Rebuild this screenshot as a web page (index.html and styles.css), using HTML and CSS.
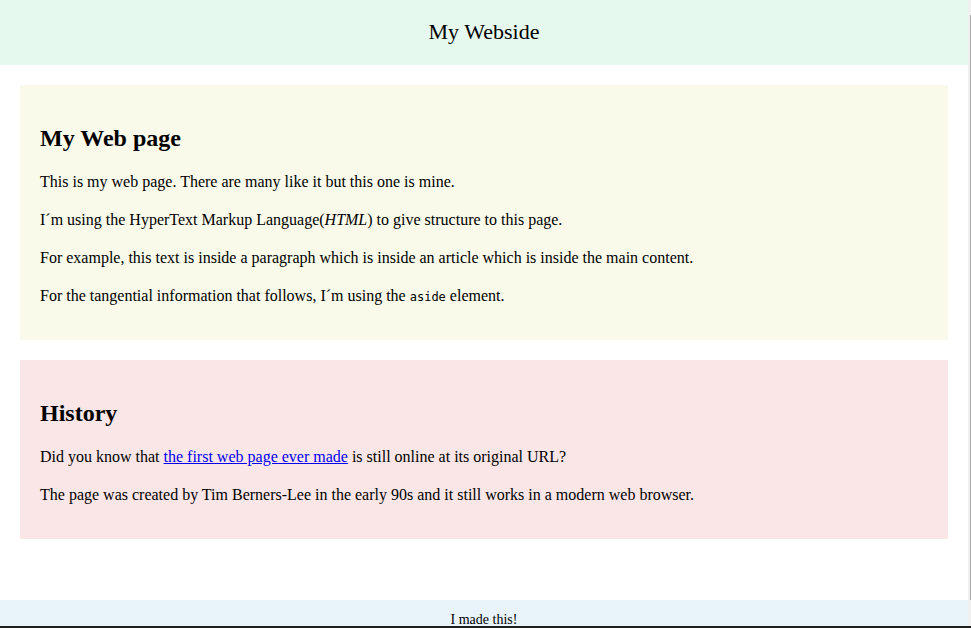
FILE: index.html
```html
<!DOCTYPE html>
<html lang="en">
<head>
<meta charset="utf-8">
<title>My Webside</title>
<link rel="stylesheet" href="styles.css">
</head>
<body>
<div class="page">
  <header class="site-header">My Webside</header>
  <main class="main">
    <article class="article">
      <h2 class="title">My Web page</h2>
      <p class="text">This is my web page. There are many like it but this one is mine.</p>
      <p class="text">I´m using the HyperText Markup Language(<em>HTML</em>) to give structure to this page.</p>
      <p class="text">For example, this text is inside a paragraph which is inside an article which is inside the main content.</p>
      <p class="text">For the tangential information that follows, I´m using the <code class="code">aside</code> element.</p>
    </article>
    <aside class="aside">
      <h2 class="title">History</h2>
      <p class="text">Did you know that <a class="link" href="#">the first web page ever made</a> is still online at its original URL?</p>
      <p class="text">The page was created by Tim Berners-Lee in the early 90s and it still works in a modern web browser.</p>
    </aside>
  </main>
</div>
<footer class="site-footer">I made this!</footer>
<div class="scrollbar"><div class="thumb"></div></div>
<div class="taskbar"></div>
</body>
</html>
```
FILE: styles.css
```css
html, body {
  margin: 0;
  padding: 0;
  background: #ffffff;
  font-family: "Liberation Serif", "Times New Roman", serif;
  color: #000;
}
.page {
  width: 968px;
}
.site-header {
  height: 65px;
  line-height: 64px;
  background: #e6f9ee;
  text-align: center;
  font-size: 22px;
}
.main {
  padding: 20px;
  display: flex;
  flex-direction: column;
  gap: 20px;
}
.article {
  background: #f9faea;
  padding: 20px;
}
.aside {
  background: #fae6e6;
  padding: 20px 20px 21px;
}
.title {
  font-size: 24px;
  font-weight: bold;
  margin: 19px 0 19px;
  line-height: 28px;
}
.text {
  font-size: 16px;
  line-height: 22px;
  margin: 16px 0;
}
.text:last-child {
  margin-bottom: 12px;
}
.code {
  font-family: "DejaVu Sans Mono", monospace;
  font-size: 12px;
}
.link {
  color: #0000ee;
  text-decoration: underline;
}
.site-footer {
  position: fixed;
  left: 0;
  bottom: 0;
  width: 968px;
  height: 28px;
  background: #e8f4fa;
  text-align: center;
  font-size: 14px;
  line-height: 14px;
  box-sizing: border-box;
  padding-top: 13px;
}
.scrollbar {
  position: fixed;
  top: 0;
  right: 0;
  width: 3px;
  height: 628px;
  background: #f0f0f0;
}
.thumb {
  position: absolute;
  top: 15px;
  right: 0;
  width: 1px;
  height: 585px;
  background: #a8a8a8;
}
.taskbar {
  position: fixed;
  left: 0;
  bottom: 0;
  width: 971px;
  height: 2px;
  background: #1e1e1e;
}
```
